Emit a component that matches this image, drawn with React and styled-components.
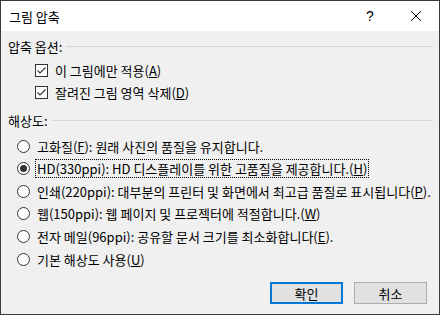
import styled, { createGlobalStyle } from 'styled-components';

const GlobalStyle = createGlobalStyle`
  html, body {
    margin: 0;
    padding: 0;
    background: #ffffff;
  }
  body {
    font-family: "Noto Sans CJK KR", "Noto Sans", sans-serif;
    font-size: 13px;
    color: #000000;
  }
`;

const Window = styled.div`
  width: 440px;
  height: 315px;
  box-sizing: border-box;
  border: 1px solid #3a3a3a;
  background: #f0f0f0;
  display: flex;
  flex-direction: column;
`;

const TitleBar = styled.div`
  height: 30px;
  background: #ffffff;
  display: flex;
  align-items: center;
  padding-left: 8px;
`;

const Title = styled.span`
  flex: 1;
  font-size: 13px;
`;

const TitleButton = styled.div`
  width: 46px;
  height: 30px;
  display: flex;
  align-items: center;
  justify-content: center;
  font-family: "Liberation Sans", sans-serif;
  font-size: 14px;
`;

const Content = styled.div`
  flex: 1;
  display: flex;
  flex-direction: column;
  padding: 7px 6px 0 7px;
`;

const GroupHeader = styled.div`
  display: flex;
  align-items: center;
  gap: 4px;
  height: 17px;
  margin-top: ${(p) => p.$top || 0}px;

  &::after {
    content: '';
    flex: 1;
    height: 1px;
    background: #d6d6d6;
  }
`;

const OptionList = styled.div`
  display: flex;
  flex-direction: column;
  padding-left: ${(p) => p.$indent}px;
  margin-top: ${(p) => p.$top}px;
`;

const Row = styled.label`
  display: flex;
  align-items: center;
  height: ${(p) => p.$height}px;
  white-space: nowrap;
`;

const Box = styled.span`
  width: 13px;
  height: 13px;
  box-sizing: border-box;
  border: 1px solid #333333;
  background: #ffffff;
  display: flex;
  align-items: center;
  justify-content: center;
  margin-right: 5px;
`;

const Radio = styled.span`
  width: 13px;
  height: 13px;
  box-sizing: border-box;
  border: 1px solid #333333;
  border-radius: 50%;
  background: #ffffff;
  display: flex;
  align-items: center;
  justify-content: center;
  margin-right: 5px;

  &::after {
    content: '';
    display: ${(p) => (p.$checked ? 'block' : 'none')};
    width: 7px;
    height: 7px;
    border-radius: 50%;
    background: #333333;
  }
`;

const Text = styled.span`
  padding: 0 1px;
  line-height: 17px;
  border: 1px dotted ${(p) => (p.$focus ? '#000000' : 'transparent')};
`;

const Key = styled.span`
  text-decoration: underline;
`;

const Footer = styled.div`
  display: flex;
  justify-content: flex-end;
  gap: 11px;
  padding: 0 6px 10px 0;
  margin-top: auto;
`;

const Button = styled.button`
  width: 73px;
  height: 22px;
  box-sizing: border-box;
  background: #e1e1e1;
  border: ${(p) => (p.$primary ? '2px solid #0078d7' : '1px solid #adadad')};
  font-family: inherit;
  font-size: 13px;
  padding: 0;
  color: #000000;
`;

const Check = () => (
  <svg width="11" height="11" viewBox="0 0 11 11">
    <path d="M1.5 5.5 L4 8 L9.5 2.5" fill="none" stroke="#333333" strokeWidth="1.1" />
  </svg>
);

const resolutions = [
  { pre: '고화질(', key: 'F', post: '): 원래 사진의 품질을 유지합니다.' },
  { pre: 'HD(330ppi): HD 디스플레이를 위한 고품질을 제공합니다.(', key: 'H', post: ')', checked: true },
  { pre: '인쇄(220ppi): 대부분의 프린터 및 화면에서 최고급 품질로 표시됩니다(', key: 'P', post: ').' },
  { pre: '웹(150ppi): 웹 페이지 및 프로젝터에 적절합니다.(', key: 'W', post: ')' },
  { pre: '전자 메일(96ppi): 공유할 문서 크기를 최소화합니다(', key: 'E', post: ').' },
  { pre: '기본 해상도 사용(', key: 'U', post: ')' },
];

const App = () => {
  return (
    <Window>
      <GlobalStyle />
      <TitleBar>
        <Title>그림 압축</Title>
        <TitleButton>?</TitleButton>
        <TitleButton>
          <svg width="12" height="12" viewBox="0 0 12 12">
            <path d="M1 1 L11 11 M11 1 L1 11" stroke="#000" strokeWidth="1" />
          </svg>
        </TitleButton>
      </TitleBar>
      <Content>
        <GroupHeader>압축 옵션:</GroupHeader>
        <OptionList $indent={27} $top={4.5}>
          <Row $height={22}>
            <Box><Check /></Box>
            <Text>이 그림에만 적용(<Key>A</Key>)</Text>
          </Row>
          <Row $height={22}>
            <Box><Check /></Box>
            <Text>잘려진 그림 영역 삭제(<Key>D</Key>)</Text>
          </Row>
        </OptionList>
        <GroupHeader $top={8.7}>해상도:</GroupHeader>
        <OptionList $indent={9} $top={5.5}>
          {resolutions.map((r, i) => (
            <Row key={i} $height={22.67}>
              <Radio $checked={r.checked} />
              <Text $focus={r.checked}>
                {r.pre}
                <Key>{r.key}</Key>
                {r.post}
              </Text>
            </Row>
          ))}
        </OptionList>
        <Footer>
          <Button $primary>확인</Button>
          <Button>취소</Button>
        </Footer>
      </Content>
    </Window>
  );
};

export default App;
